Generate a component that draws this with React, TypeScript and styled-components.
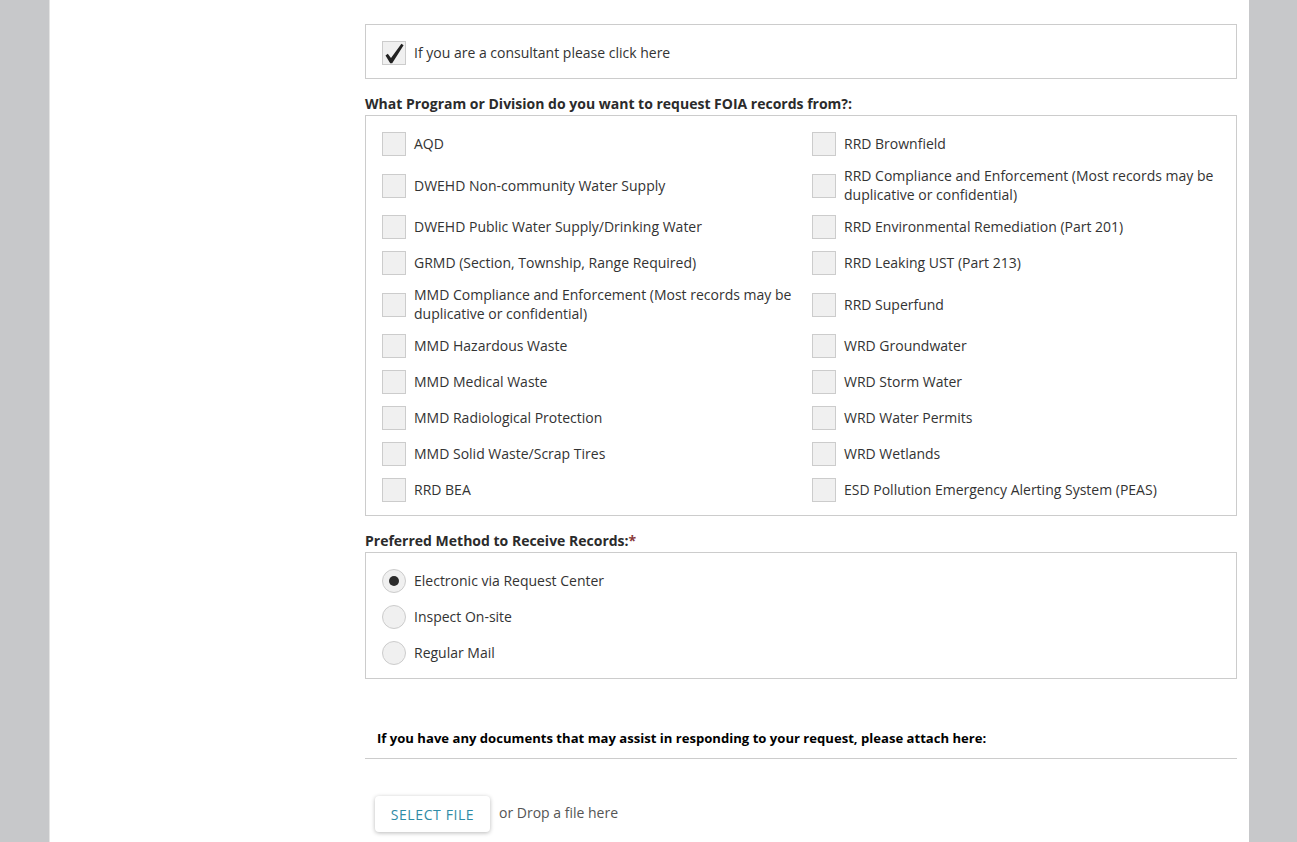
import React from "react";
import styled, { createGlobalStyle } from "styled-components";

const Global = createGlobalStyle`
  html, body { margin: 0; padding: 0; height: 842px; overflow: hidden; background: #c7c8ca; }
  body { font-family: "Open Sans", "Liberation Sans", sans-serif; font-size: 14px; line-height: 19px; color: #333; }
`;

const Page = styled.main`
  box-sizing: border-box;
  width: 1200px;
  height: 842px;
  margin-left: 49px;
  padding: 24px 12px 0 315px;
  background: #fff;
  border-left: 1px solid #e4e4e4;
  overflow: hidden;
`;

const Box = styled.div`
  border: 1px solid #ccc;
  padding: 10px 0 7px 16px;
`;

const SectionLabel = styled.div`
  font-weight: 700;
  color: #2b2b2b;
  margin: 15px 0 2px;
  height: 19px;
`;

const Required = styled.span`
  color: #8a3b3b;
`;

const Grid = styled.div`
  display: grid;
  grid-template-columns: 430px 1fr;
`;

const Option = styled.label`
  display: flex;
  align-items: center;
  min-height: 36px;
  padding: 4px 0;
  box-sizing: border-box;
`;

const OptionText = styled.span`
  margin: 0 0 1px 8px;
  color: #333;
`;

const Check = styled.span`
  flex: none;
  box-sizing: border-box;
  display: flex;
  align-items: center;
  justify-content: center;
  width: 24px;
  height: 24px;
  background: #f0f0f0;
  border: 1px solid #ccc;
`;

const Radio = styled(Check)`
  border-radius: 50%;
`;

const Dot = styled.span`
  width: 10px;
  height: 10px;
  border-radius: 50%;
  background: #2b2b2b;
`;

const AttachHeading = styled.div`
  margin-top: 50px;
  padding: 0 12px 10px;
  border-bottom: 1px solid #ccc;
  font-size: 13.1px;
  font-weight: 700;
  color: #000;
`;

const UploadRow = styled.div`
  display: flex;
  align-items: center;
  margin: 37px 0 0 10px;
`;

const SelectButton = styled.button`
  box-sizing: border-box;
  width: 115px;
  height: 36px;
  border: 0;
  border-radius: 4px;
  background: #fff;
  box-shadow: 0 1px 4px rgba(0, 0, 0, 0.28);
  font: 400 14px/19px "Open Sans", "Liberation Sans", sans-serif;
  letter-spacing: 0.6px;
  color: #2f8ba6;
  padding: 0;
`;

const DropText = styled.span`
  margin: 0 0 4px 9px;
  color: #555;
`;

const left = [
  "AQD",
  "DWEHD Non-community Water Supply",
  "DWEHD Public Water Supply/Drinking Water",
  "GRMD (Section, Township, Range Required)",
  "MMD Compliance and Enforcement (Most records may be duplicative or confidential)",
  "MMD Hazardous Waste",
  "MMD Medical Waste",
  "MMD Radiological Protection",
  "MMD Solid Waste/Scrap Tires",
  "RRD BEA",
];

const right = [
  "RRD Brownfield",
  "RRD Compliance and Enforcement (Most records may be duplicative or confidential)",
  "RRD Environmental Remediation (Part 201)",
  "RRD Leaking UST (Part 213)",
  "RRD Superfund",
  "WRD Groundwater",
  "WRD Storm Water",
  "WRD Water Permits",
  "WRD Wetlands",
  "ESD Pollution Emergency Alerting System (PEAS)",
];

const cells = left.flatMap((l, i) => [l, right[i]]);

export default function App() {
  return (
    <>
      <Global />
      <Page>
        <Box>
          <Option>
            <Check>
              <svg width="22" height="22" viewBox="0 0 22 22">
                <path d="M2.5 13.5 L4.8 11.8 L8 16 L18.4 1.8 L20.6 3.2 L9.2 21.2 L7.2 21.2 Z" fill="#222" />
              </svg>
            </Check>
            <OptionText>If you are a consultant please click here</OptionText>
          </Option>
        </Box>

        <SectionLabel>What Program or Division do you want to request FOIA records from?:</SectionLabel>
        <Box>
          <Grid>
            {cells.map((c) => (
              <Option key={c}>
                <Check />
                <OptionText>{c}</OptionText>
              </Option>
            ))}
          </Grid>
        </Box>

        <SectionLabel>
          Preferred Method to Receive Records:<Required>*</Required>
        </SectionLabel>
        <Box>
          <Option>
            <Radio>
              <Dot />
            </Radio>
            <OptionText>Electronic via Request Center</OptionText>
          </Option>
          <Option>
            <Radio />
            <OptionText>Inspect On-site</OptionText>
          </Option>
          <Option>
            <Radio />
            <OptionText>Regular Mail</OptionText>
          </Option>
        </Box>

        <AttachHeading>If you have any documents that may assist in responding to your request, please attach here:</AttachHeading>
        <UploadRow>
          <SelectButton>SELECT FILE</SelectButton>
          <DropText>or Drop a file here</DropText>
        </UploadRow>
      </Page>
    </>
  );
}
